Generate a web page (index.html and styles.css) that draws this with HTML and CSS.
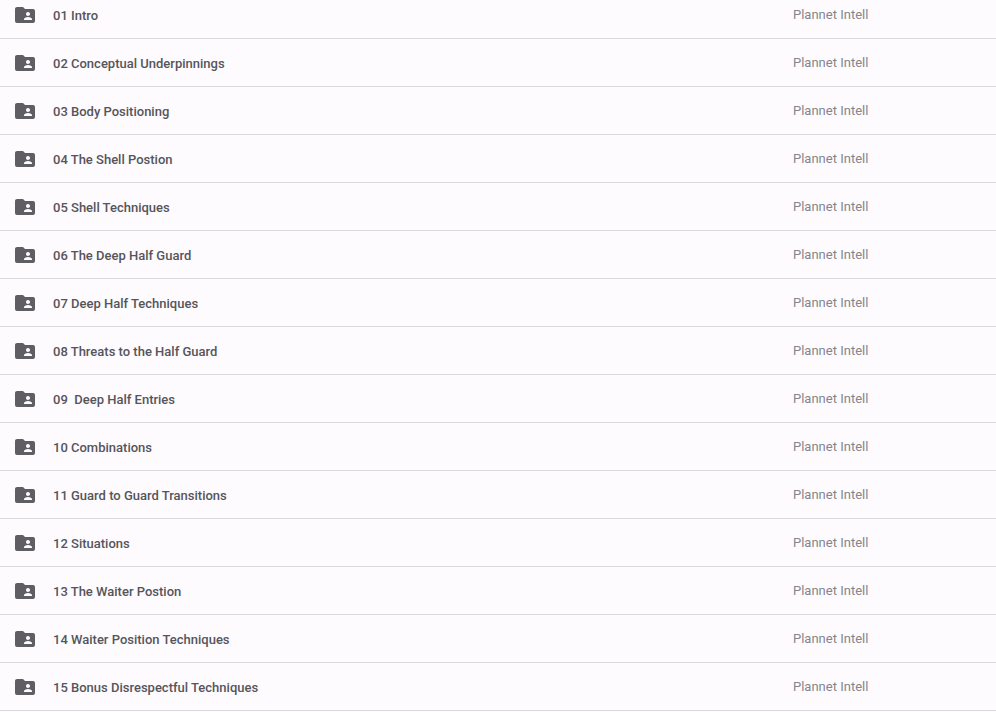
FILE: index.html
```html
<!DOCTYPE html>
<html lang="en">
<head>
    <meta charset="UTF-8">
    <meta name="viewport" content="width=device-width, initial-scale=1.0">
    <title>Folders</title>
    <link rel="stylesheet" href="styles.css">
</head>
<body>
    <svg class="sprite" width="0" height="0">
        <symbol id="folder-shared" viewBox="0 0 24 24">
            <path d="M20 6h-8l-2-2H4c-1.1 0-1.99.9-1.99 2L2 18c0 1.1.9 2 2 2h16c1.1 0 2-.9 2-2V8c0-1.1-.9-2-2-2zm-5 3c1.1 0 2 .9 2 2s-.9 2-2 2-2-.9-2-2 .9-2 2-2zm4 8h-8v-1c0-1.33 2.67-2 4-2s4 .67 4 2v1z"/>
        </symbol>
    </svg>
    <ul class="folder-list">
        <li class="folder-row"><svg class="folder-icon"><use href="#folder-shared"/></svg><span class="folder-name">01 Intro</span><span class="folder-owner">Plannet Intell</span></li>
        <li class="folder-row"><svg class="folder-icon"><use href="#folder-shared"/></svg><span class="folder-name">02 Conceptual Underpinnings</span><span class="folder-owner">Plannet Intell</span></li>
        <li class="folder-row"><svg class="folder-icon"><use href="#folder-shared"/></svg><span class="folder-name">03 Body Positioning</span><span class="folder-owner">Plannet Intell</span></li>
        <li class="folder-row"><svg class="folder-icon"><use href="#folder-shared"/></svg><span class="folder-name">04 The Shell Postion</span><span class="folder-owner">Plannet Intell</span></li>
        <li class="folder-row"><svg class="folder-icon"><use href="#folder-shared"/></svg><span class="folder-name">05 Shell Techniques</span><span class="folder-owner">Plannet Intell</span></li>
        <li class="folder-row"><svg class="folder-icon"><use href="#folder-shared"/></svg><span class="folder-name">06 The Deep Half Guard</span><span class="folder-owner">Plannet Intell</span></li>
        <li class="folder-row"><svg class="folder-icon"><use href="#folder-shared"/></svg><span class="folder-name">07 Deep Half Techniques</span><span class="folder-owner">Plannet Intell</span></li>
        <li class="folder-row"><svg class="folder-icon"><use href="#folder-shared"/></svg><span class="folder-name">08 Threats to the Half Guard</span><span class="folder-owner">Plannet Intell</span></li>
        <li class="folder-row"><svg class="folder-icon"><use href="#folder-shared"/></svg><span class="folder-name">09&nbsp; Deep Half Entries</span><span class="folder-owner">Plannet Intell</span></li>
        <li class="folder-row"><svg class="folder-icon"><use href="#folder-shared"/></svg><span class="folder-name">10 Combinations</span><span class="folder-owner">Plannet Intell</span></li>
        <li class="folder-row"><svg class="folder-icon"><use href="#folder-shared"/></svg><span class="folder-name">11 Guard to Guard Transitions</span><span class="folder-owner">Plannet Intell</span></li>
        <li class="folder-row"><svg class="folder-icon"><use href="#folder-shared"/></svg><span class="folder-name">12 Situations</span><span class="folder-owner">Plannet Intell</span></li>
        <li class="folder-row"><svg class="folder-icon"><use href="#folder-shared"/></svg><span class="folder-name">13 The Waiter Postion</span><span class="folder-owner">Plannet Intell</span></li>
        <li class="folder-row"><svg class="folder-icon"><use href="#folder-shared"/></svg><span class="folder-name">14 Waiter Position Techniques</span><span class="folder-owner">Plannet Intell</span></li>
        <li class="folder-row"><svg class="folder-icon"><use href="#folder-shared"/></svg><span class="folder-name">15 Bonus Disrespectful Techniques</span><span class="folder-owner">Plannet Intell</span></li>
    </ul>
</body>
</html>
```

FILE: styles.css
```css
html, body {
    height: 100%;
}
body {
    font-family: 'Roboto', 'Liberation Sans', sans-serif;
    background-color: #fdfbfe;
    margin: 0;
    padding: 0;
    overflow: hidden;
}
.sprite {
    display: block;
    position: absolute;
}
/* list is scrolled a little in the screenshot, top row is cut off */
.folder-list {
    list-style: none;
    margin: -9px 0 0;
    padding: 0;
}
.folder-row {
    display: flex;
    align-items: center;
    height: 47px;
    border-bottom: 1px solid #dadadd;
    padding-left: 13px;
}
.folder-icon {
    width: 24px;
    height: 24px;
    margin-top: 1px;
    fill: #5f5e63;
    flex: none;
}
.folder-name {
    margin-left: 16px;
    padding-top: 2px;
    width: 740px;
    flex: none;
    font-size: 13px;
    font-weight: 500;
    color: #56555a;
    white-space: nowrap;
}
.folder-owner {
    font-size: 13px;
    color: #86858b;
    white-space: nowrap;
}
```
